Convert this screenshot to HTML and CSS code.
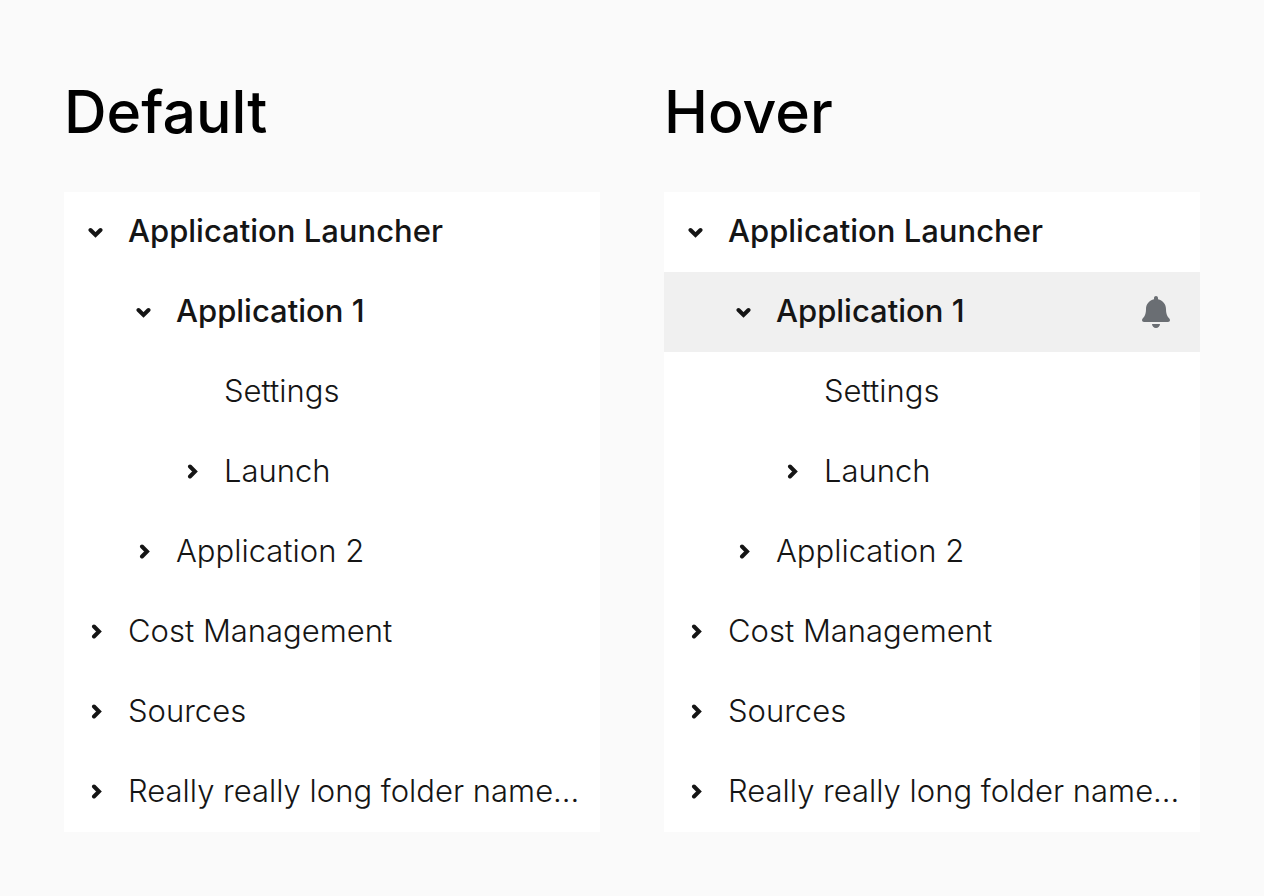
FILE: index.html
```html
<!DOCTYPE html>
<html lang="en">
<head>
<meta charset="utf-8">
<title>Tree view states</title>
<link rel="stylesheet" href="styles.css">
</head>
<body>
<svg class="defs" aria-hidden="true">
  <symbol id="down" viewBox="0 0 16 16"><path d="M2.500 6l5 5 5-5" fill="none" stroke="currentColor" stroke-width="4" stroke-linecap="round"/></symbol>
  <symbol id="right" viewBox="0 0 16 16"><path d="M6 2.500l5 5-5 5" fill="none" stroke="currentColor" stroke-width="4" stroke-linecap="round"/></symbol>
</svg>
<main class="page">
  <section class="example">
    <h1 class="title">Default</h1>
    <ul class="tree">
      <li><button class="node open" type="button"><svg class="chevron"><use href="#down"/></svg><span class="label">Application Launcher</span></button></li>
      <li><button class="node open level-2" type="button"><svg class="chevron"><use href="#down"/></svg><span class="label">Application 1</span></button></li>
      <li><button class="node level-3" type="button"><span class="chevron"></span><span class="label">Settings</span></button></li>
      <li><button class="node level-3" type="button"><svg class="chevron"><use href="#right"/></svg><span class="label">Launch</span></button></li>
      <li><button class="node level-2" type="button"><svg class="chevron"><use href="#right"/></svg><span class="label">Application 2</span></button></li>
      <li><button class="node" type="button"><svg class="chevron"><use href="#right"/></svg><span class="label">Cost Management</span></button></li>
      <li><button class="node" type="button"><svg class="chevron"><use href="#right"/></svg><span class="label">Sources</span></button></li>
      <li><button class="node" type="button"><svg class="chevron"><use href="#right"/></svg><span class="label">Really really long folder name...</span></button></li>
    </ul>
  </section>
  <section class="example">
    <h1 class="title">Hover</h1>
    <ul class="tree">
      <li><button class="node open" type="button"><svg class="chevron"><use href="#down"/></svg><span class="label">Application Launcher</span></button></li>
      <li class="row hovered"><button class="node open level-2" type="button"><svg class="chevron"><use href="#down"/></svg><span class="label">Application 1</span></button><button class="action" type="button" aria-label="Notifications"><svg class="bell" viewBox="0 0 448 512"><path fill="currentColor" d="M224 512c35.320 0 63.970-28.650 63.970-64H160.030c0 35.350 28.650 64 63.970 64zm215.390-149.710c-19.320-20.760-55.470-51.990-55.470-154.290 0-77.700-54.480-139.900-127.940-155.160V32c0-17.670-14.320-32-31.980-32s-31.980 14.330-31.980 32v20.840C118.560 68.100 64.080 130.300 64.080 208c0 102.300-36.150 133.530-55.470 154.290-6 6.450-8.660 14.160-8.610 21.710.11 16.400 12.980 32 32.100 32h383.800c19.120 0 32-15.600 32.100-32 .05-7.550-2.610-15.270-8.610-21.710z"/></svg></button></li>
      <li><button class="node level-3" type="button"><span class="chevron"></span><span class="label">Settings</span></button></li>
      <li><button class="node level-3" type="button"><svg class="chevron"><use href="#right"/></svg><span class="label">Launch</span></button></li>
      <li><button class="node level-2" type="button"><svg class="chevron"><use href="#right"/></svg><span class="label">Application 2</span></button></li>
      <li><button class="node" type="button"><svg class="chevron"><use href="#right"/></svg><span class="label">Cost Management</span></button></li>
      <li><button class="node" type="button"><svg class="chevron"><use href="#right"/></svg><span class="label">Sources</span></button></li>
      <li><button class="node" type="button"><svg class="chevron"><use href="#right"/></svg><span class="label">Really really long folder name...</span></button></li>
    </ul>
  </section>
</main>
</body>
</html>
```
FILE: styles.css
```css
body { margin: 0; background: #fafafa; font-family: Inter, sans-serif; }
.defs { display: none; }
.page { display: grid; grid-template-columns: repeat(2, minmax(0, 1fr)); gap: 64px; padding: 64px; }
.title { margin: 0; padding-bottom: 32px; color: #000; font-size: 59px; font-weight: 500; line-height: 96px; }
.tree { margin: 0; padding: 0; list-style: none; background: #fff; }
.row { display: flex; align-items: center; }
.hovered { background: #f0f0f0; }
.node { display: flex; align-items: center; gap: 24px; flex: 1; width: 100%; min-width: 0; height: 80px; padding: 0 24px; border: 0; background: none; color: #151515; font: 300 31px/48px Inter, sans-serif; text-align: left; }
.open { font-weight: 500; }
.level-2 { padding-left: 72px; }
.level-3 { padding-left: 120px; }
.chevron { flex: none; width: 16px; height: 16px; }
.label { padding-bottom: 2px; white-space: nowrap; }
.action { display: flex; padding: 0; margin-right: 30px; border: 0; background: none; color: #6a6e73; }
.bell { width: 28px; height: 32px; }
```
